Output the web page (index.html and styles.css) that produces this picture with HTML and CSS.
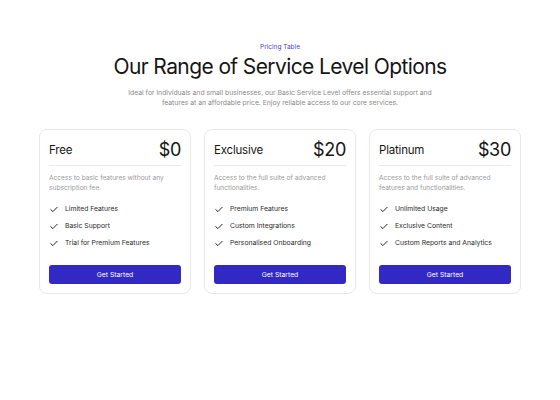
FILE: index.html
```html
<!DOCTYPE html>
<html>
<head>
<meta charset="utf-8">
<link rel="stylesheet" href="styles.css">
</head>
<body>
<div class="page">
  <header class="intro">
    <div class="eyebrow">Pricing Table</div>
    <h1 class="title">Our Range of Service Level Options</h1>
    <p class="lead">Ideal for individuals and small businesses, our Basic Service Level offers essential support and<br>features at an affordable price. Enjoy reliable access to our core services.</p>
  </header>
  <div class="cards">
    <div class="card">
      <div class="card-head"><span class="plan">Free</span><span class="price">$0</span></div>
      <p class="desc">Access to basic features without any subscription fee.</p>
      <ul class="features">
        <li><svg class="check" viewBox="0 0 10 8"><path d="M1 4.2 L3.6 6.6 L9 1.2"/></svg>Limited Features</li>
        <li><svg class="check" viewBox="0 0 10 8"><path d="M1 4.2 L3.6 6.6 L9 1.2"/></svg>Basic Support</li>
        <li><svg class="check" viewBox="0 0 10 8"><path d="M1 4.2 L3.6 6.6 L9 1.2"/></svg>Trial for Premium Features</li>
      </ul>
      <button class="btn">Get Started</button>
    </div>
    <div class="card">
      <div class="card-head"><span class="plan">Exclusive</span><span class="price">$20</span></div>
      <p class="desc">Access to the full suite of advanced functionalities.</p>
      <ul class="features">
        <li><svg class="check" viewBox="0 0 10 8"><path d="M1 4.2 L3.6 6.6 L9 1.2"/></svg>Premium Features</li>
        <li><svg class="check" viewBox="0 0 10 8"><path d="M1 4.2 L3.6 6.6 L9 1.2"/></svg>Custom Integrations</li>
        <li><svg class="check" viewBox="0 0 10 8"><path d="M1 4.2 L3.6 6.6 L9 1.2"/></svg>Personalised Onboarding</li>
      </ul>
      <button class="btn">Get Started</button>
    </div>
    <div class="card">
      <div class="card-head"><span class="plan">Platinum</span><span class="price">$30</span></div>
      <p class="desc">Access to the full suite of advanced features and functionalities.</p>
      <ul class="features">
        <li><svg class="check" viewBox="0 0 10 8"><path d="M1 4.2 L3.6 6.6 L9 1.2"/></svg>Unlimited Usage</li>
        <li><svg class="check" viewBox="0 0 10 8"><path d="M1 4.2 L3.6 6.6 L9 1.2"/></svg>Exclusive Content</li>
        <li><svg class="check" viewBox="0 0 10 8"><path d="M1 4.2 L3.6 6.6 L9 1.2"/></svg>Custom Reports and Analytics</li>
      </ul>
      <button class="btn">Get Started</button>
    </div>
  </div>
</div>
</body>
</html>
```
FILE: styles.css
```css
* { box-sizing: border-box; }
html, body { margin: 0; padding: 0; background: #ffffff; }
body {
  font-family: Inter, "Noto Sans", "Liberation Sans", sans-serif;
  color: #141414;
}
.page {
  width: 560px;
  height: 400px;
  padding-top: 42px;
}
.intro {
  text-align: center;
}
.eyebrow {
  font-size: 6.5px;
  line-height: 10px;
  color: #4b3fd6;
  font-weight: 400;
}
.title {
  margin: 2px 0 0;
  font-size: 21px;
  line-height: 26px;
  font-weight: 400;
  letter-spacing: -0.6px;
  color: #151515;
}
.lead {
  margin: 8px 0 0;
  font-size: 6.8px;
  line-height: 10px;
  color: #8a8a8a;
}
.cards {
  display: flex;
  justify-content: center;
  gap: 13px;
  margin-top: 21px;
}
.card {
  width: 152px;
  border: 1px solid #e8e8e8;
  border-radius: 8px;
  padding: 10px 9px 9px;
  display: flex;
  flex-direction: column;
}
.card-head {
  display: flex;
  justify-content: space-between;
  align-items: center;
  height: 20px;
  line-height: 20px;
}
.plan {
  font-size: 11.5px;
  font-weight: 400;
  color: #161616;
  letter-spacing: -0.2px;
}
.price {
  font-size: 18px;
  font-weight: 400;
  color: #141414;
  letter-spacing: -0.3px;
}
.desc {
  margin: 5px 0 0;
  padding-top: 7px;
  border-top: 1px solid #ececec;
  font-size: 6.6px;
  line-height: 10px;
  color: #9a9a9a;
}
.features {
  list-style: none;
  margin: 11px 0 0;
  padding: 0;
  display: flex;
  flex-direction: column;
  gap: 7px;
}
.features li {
  display: flex;
  align-items: center;
  gap: 7px;
  font-size: 6.8px;
  line-height: 10px;
  color: #2a2a2a;
}
.check {
  width: 8px;
  height: 7px;
  margin-left: 1px;
  fill: none;
  stroke: #1a1a1a;
  stroke-width: 1.2;
  stroke-linecap: round;
  stroke-linejoin: round;
}
.btn {
  margin-top: 17px;
  height: 19px;
  border: none;
  border-radius: 3px;
  background: #3228c4;
  color: #ffffff;
  font-family: Inter, "Noto Sans", "Liberation Sans", sans-serif;
  font-size: 6.8px;
  font-weight: 400;
  padding: 0;
}
```
